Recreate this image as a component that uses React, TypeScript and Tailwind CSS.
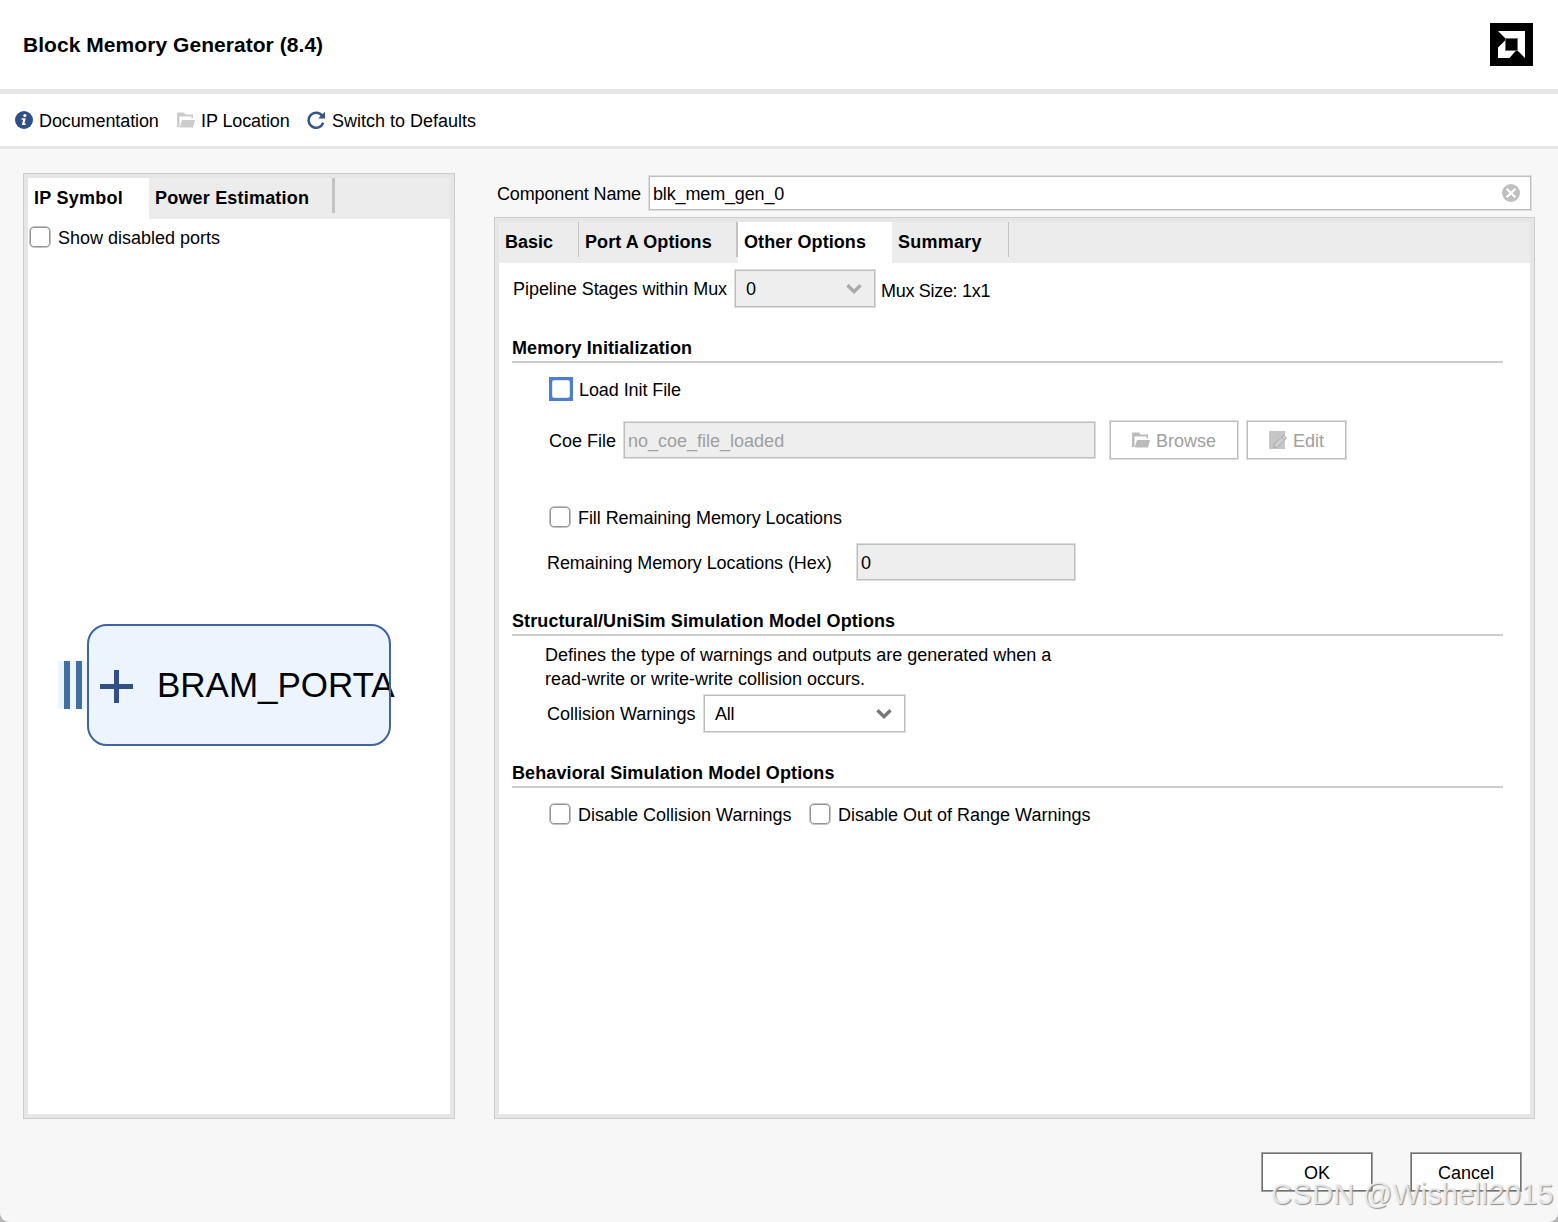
import type { ReactNode } from "react";

function Checkbox({ label, focused = false, className = "" }: { label: string; focused?: boolean; className?: string }) {
  return (
    <label className={`flex h-6 items-center ${className}`}>
      {focused ? (
        <span className="mr-[6px] size-6 shrink-0 bg-[#4f7dd0] p-[3px]">
          <span className="block size-[18px] rounded-[3px] bg-white shadow-[inset_0_0_0_0.5px_#c8c8c8]" />
        </span>
      ) : (
        <span className="mr-[7px] size-[22px] shrink-0 rounded-[5px] border border-[#c4c4c4] bg-white shadow-[inset_0_0_0_1px_#959595]" />
      )}
      <span className="relative top-px">{label}</span>
    </label>
  );
}

function FolderIcon({ color }: { color: string }) {
  return (
    <svg width="18" height="16" viewBox="0 0 18 16" fill={color}>
      <path d="M0 15V1.500L1 .5H7L8.500 2.500H16V6.500H14.500V4.500H2.500V15Z" />
      <path d="M5 8H18L16 15.500H2.700Z" />
    </svg>
  );
}

function InfoIcon() {
  return (
    <svg width="18" height="18" viewBox="0 0 18 18">
      <circle cx="9" cy="9" r="9" fill="#314f86" />
      <circle cx="9.900" cy="4.500" r="1.600" fill="#fff" />
      <path d="M6.800 7.300H10.700L9.500 12.400H10.900L10.600 14H6.900L8.100 8.800H6.500Z" fill="#fff" />
    </svg>
  );
}

function RefreshIcon() {
  return (
    <svg width="18" height="18" viewBox="0 0 18 18">
      <path d="M15.200 4.800A7.500 7.500 0 1 0 16.200 11.800" fill="none" stroke="#36538a" strokeWidth="2.500" />
      <path d="M18 .8V7.500H11.200Z" fill="#36538a" />
    </svg>
  );
}

function EditIcon() {
  return (
    <svg width="18" height="18" viewBox="0 0 18 18">
      <path d="M0 0H16V18H0Z" fill="#c6c6c6" />
      <path d="M4.500 17L5.500 13L14.500 4L17.500 7L8.500 16Z" fill="#cfcfcf" stroke="#aaa" strokeWidth="1" />
      <path d="M12.500 6L15.500 9" stroke="#aaa" />
    </svg>
  );
}

function Chevron({ color }: { color: string }) {
  return (
    <svg width="16" height="12" viewBox="0 0 16 12">
      <path d="M1.500 2.200L8 8.700L14.500 2.200" fill="none" stroke={color} strokeWidth="3.400" />
    </svg>
  );
}

function ClearIcon() {
  return (
    <svg width="18" height="18" viewBox="0 0 18 18">
      <circle cx="9" cy="9" r="9" fill="#bfbfbf" />
      <path d="M4.700 4.700L13.300 13.300M13.300 4.700L4.700 13.300" stroke="#fff" strokeWidth="2.200" />
    </svg>
  );
}

function BrandMark() {
  return (
    <svg width="43" height="43" viewBox="0 0 43 43">
      <path d="M0 0H43V43H0Z" />
      <path d="M8 8H35V35L27.500 27.500V15.500H15.500Z" fill="#fff" />
      <path d="M15.500 17V27.500H26L19.500 35H8V24.500Z" fill="#fff" />
      <path d="M15.500 15.500H27.500V27.500H15.500Z" stroke="#6f716d" />
    </svg>
  );
}

function SectionTitle({ children, className = "" }: { children: ReactNode; className?: string }) {
  return (
    <h2 className={`ml-[13px] h-[26px] w-[991px] border-b-2 border-[#cccccc] font-bold leading-[22px] tracking-[0.1px] ${className}`}>
      {children}
    </h2>
  );
}

function Panel({ children, className }: { children: ReactNode; className: string }) {
  return (
    <div className={`border border-[#cccccc] bg-[#e6e6e6] p-1 ${className}`}>
      <div className="flex h-full flex-col bg-white">{children}</div>
    </div>
  );
}

export default function App() {
  return (
    <div className="h-[1222px] w-[1558px] overflow-hidden bg-[#b4b4b4] font-['Liberation_Sans',Arial,sans-serif] text-[18px] leading-6 text-black whitespace-nowrap">
      <div className="relative flex h-full flex-col overflow-hidden rounded-b-[9px] bg-[#f7f7f7]">
        <header className="flex h-[94px] shrink-0 items-center justify-between border-b-[5px] border-[#e6e6e6] bg-white pr-[25px] pl-[23px]">
          <h1 className="text-[21px] font-bold tracking-[0.05px]">Block Memory Generator (8.4)</h1>
          <BrandMark />
        </header>

        <nav className="flex h-[55px] shrink-0 items-center border-b-[3px] border-[#e6e6e6] bg-white pl-[15px]">
          <button className="flex w-[162px] items-center gap-[6px]"><InfoIcon /><span className="pt-0.5 tracking-[-0.1px]">Documentation</span></button>
          <button className="flex w-[130px] items-center gap-[6px]"><FolderIcon color="#cccccc" /><span className="pt-0.5 tracking-[-0.1px]">IP Location</span></button>
          <button className="flex items-center gap-[7px]"><RefreshIcon /><span className="pt-0.5">Switch to Defaults</span></button>
        </nav>

        <main className="flex h-[970px] shrink-0 pl-[23px]">
          <Panel className="mt-6 h-[946px] w-[432px]">
            <div className="flex h-[41px] shrink-0 bg-[#ececec] font-bold leading-[41px]">
              <div className="w-[121px] bg-white pl-[6px] tracking-[0.25px]">IP Symbol</div>
              <div className="h-[35px] w-[186px] border-r-[3px] border-[#c3c3c3] pl-[6px] tracking-[0.19px]">Power Estimation</div>
            </div>
            <Checkbox label="Show disabled ports" className="mt-[6px] ml-px" />
            <div className="mt-[375px] ml-[30px] flex items-center">
              <div className="flex h-12 w-[29px] gap-[6px] bg-[#ecf5fe] pl-[6px]">
                <div className="w-[6px] bg-[#416fa2]" />
                <div className="w-[6px] bg-[#416fa2]" />
              </div>
              <div className="relative flex h-[122px] w-[304px] items-center rounded-[20px] bg-[#ecf5fe] pl-[13px]">
                <svg width="33" height="33" viewBox="0 0 33 33" className="mt-[3px] shrink-0">
                  <path d="M16.500 0V33M0 16.500H33" stroke="#314f86" strokeWidth="5" />
                </svg>
                <span className="ml-[24px] text-[35px] leading-9 tracking-[-0.03px]">BRAM_PORTA</span>
                <div className="absolute inset-0 rounded-[20px] border-2 border-[#4163a1]" />
              </div>
            </div>
          </Panel>

          <section className="ml-[39px] flex w-[1041px] flex-col pt-[26px]">
            <div className="flex h-9 items-center pl-[3px]">
              <span className="w-[151px] pt-0.5 tracking-[-0.15px]">Component Name</span>
              <div className="flex h-9 w-[884px] items-center justify-between border border-[#dedede] bg-white pr-[11px] pl-1 shadow-[inset_0_0_0_1px_#bdbdbd]">
                <span className="pt-0.5 tracking-[-0.15px]">blk_mem_gen_0</span>
                <ClearIcon />
              </div>
            </div>

            <Panel className="mt-[6px] h-[902px] w-full">
              <div className="flex h-[41px] shrink-0 bg-[#ececec] font-bold leading-[41px]">
                <div className="h-[35px] w-[80px] border-r border-[#c3c3c3] pl-[6px]">Basic</div>
                <div className="h-[35px] w-[159px] border-r-2 border-[#c3c3c3] pl-[6px] tracking-[0.08px]">Port A Options</div>
                <div className="w-[154px] bg-white pl-[6px] tracking-[0.08px]">Other Options</div>
                <div className="h-[35px] w-[117px] border-r border-[#c3c3c3] pl-[6px] tracking-[0.25px]">Summary</div>
              </div>

              <div className="mt-[6px] ml-[14px] flex h-[39px] items-center">
                <span className="w-[221px] tracking-[-0.04px]">Pipeline Stages within Mux</span>
                <div className="flex h-[39px] w-[142px] items-center justify-between border border-[#dedede] bg-[#eeeeee] pr-[13px] pl-[11px] shadow-[inset_0_0_0_1px_#bdbdbd]">
                  <span>0</span>
                  <Chevron color="#aaaaaa" />
                </div>
                <span className="ml-[5px] pt-1 tracking-[-0.3px]">Mux Size: 1x1</span>
              </div>

              <SectionTitle className="mt-[29px]">Memory Initialization</SectionTitle>
              <Checkbox label="Load Init File" focused className="mt-[14px] ml-[50px] tracking-[-0.08px]" />
              <div className="mt-[19px] ml-[50px] flex h-10 items-center">
                <span className="w-[74px] pt-0.5">Coe File</span>
                <div className="flex h-[38px] w-[473px] items-center border border-[#dedede] bg-[#eeeeee] pt-0.5 pl-1 text-[#a0a0a0] shadow-[inset_0_0_0_1px_#bdbdbd]">no_coe_file_loaded</div>
                <button className="ml-[13px] flex h-10 w-[130px] items-center justify-center gap-[6px] border border-[#dedede] bg-white text-[#a0a0a0] shadow-[inset_0_0_0_1px_#bdbdbd]">
                  <FolderIcon color="#bbbbbb" /><span className="pt-0.5">Browse</span>
                </button>
                <button className="ml-[7px] flex h-10 w-[101px] items-center justify-center gap-[6px] border border-[#dedede] bg-white text-[#a0a0a0] shadow-[inset_0_0_0_1px_#bdbdbd]">
                  <EditIcon /><span className="pt-0.5">Edit</span>
                </button>
              </div>
              <Checkbox label="Fill Remaining Memory Locations" className="mt-[45px] ml-[50px] tracking-[-0.07px]" />
              <div className="mt-[14px] ml-[48px] flex h-[38px] items-center">
                <span className="w-[309px] pt-0.5 tracking-[-0.08px]">Remaining Memory Locations (Hex)</span>
                <div className="flex h-[38px] w-[220px] items-center border border-[#dedede] bg-[#eeeeee] pt-0.5 pl-1 shadow-[inset_0_0_0_1px_#bdbdbd]">0</div>
              </div>

              <SectionTitle className="mt-[29px]">Structural/UniSim Simulation Model Options</SectionTitle>
              <p className="mt-[7px] ml-[46px]">
                Defines the type of warnings and outputs are generated when a<br />
                read-write or write-write collision occurs.
              </p>
              <div className="mt-[3px] ml-[48px] flex h-[39px] items-center">
                <span className="w-[156px]">Collision Warnings</span>
                <div className="flex h-[39px] w-[203px] items-center justify-between border border-[#dedede] bg-white pr-[13px] pl-[11px] shadow-[inset_0_0_0_1px_#bdbdbd]">
                  <span className="tracking-[-0.3px]">All</span>
                  <Chevron color="#777777" />
                </div>
              </div>

              <SectionTitle className="mt-[29px]">Behavioral Simulation Model Options</SectionTitle>
              <div className="mt-[14px] ml-[50px] flex">
                <Checkbox label="Disable Collision Warnings" className="w-[260px]" />
                <Checkbox label="Disable Out of Range Warnings" />
              </div>
            </Panel>
          </section>
        </main>

        <footer className="flex gap-[37px] pt-[33px] pl-[1261px]">
          <button className="h-10 w-[112px] border border-[#a0a0a0] bg-white pt-px shadow-[inset_0_0_0_1px_#707070]">OK</button>
          <button className="h-10 w-[112px] border border-[#a0a0a0] bg-white pt-px shadow-[inset_0_0_0_1px_#707070]">Cancel</button>
        </footer>
        <div className="absolute top-[1178px] left-[1271px] text-[29px] leading-8 tracking-[0.3px] text-[#efefef]/90 [text-shadow:1px_1px_1px_#909090]">
          CSDN @Wishell2015
        </div>
      </div>
    </div>
  );
}
